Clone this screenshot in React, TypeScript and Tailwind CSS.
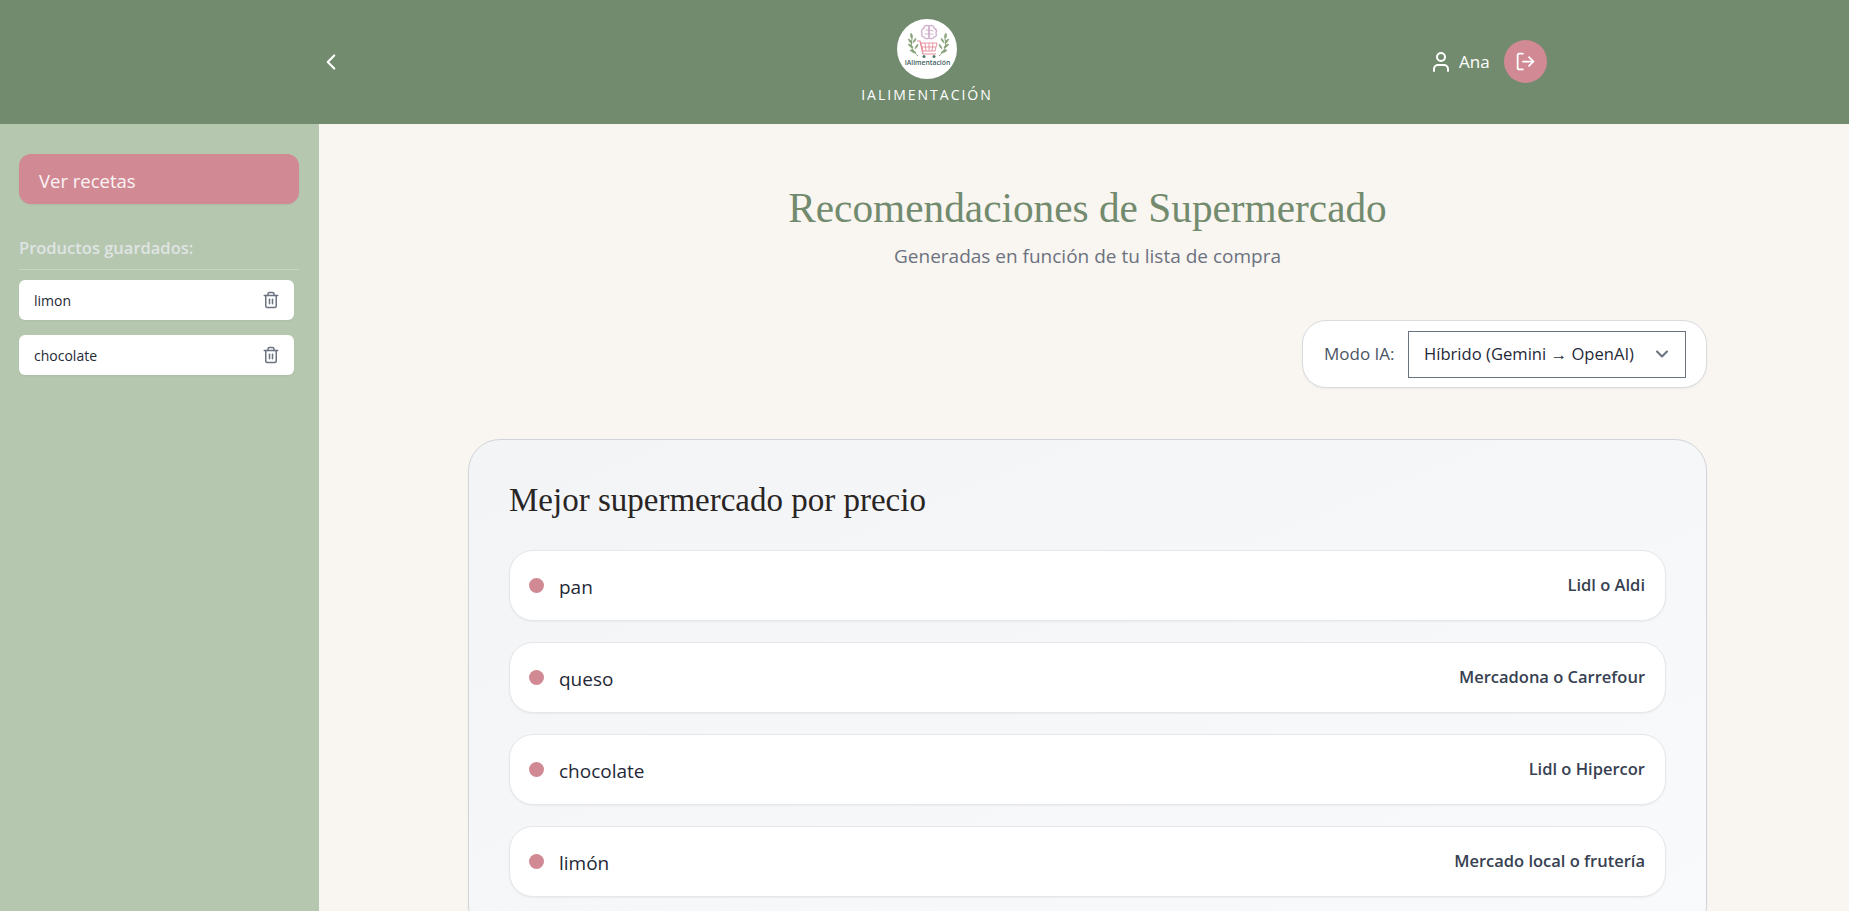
import { ChevronDown, ChevronLeft, LogOut, Trash2, User } from 'lucide-react';

const saved = ['limon', 'chocolate'];

const rows = [
  { name: 'pan', shop: 'Lidl o Aldi' },
  { name: 'queso', shop: 'Mercadona o Carrefour' },
  { name: 'chocolate', shop: 'Lidl o Hipercor' },
  { name: 'limón', shop: 'Mercado local o frutería' },
];

const Logo = () => {
  return (
    <div className="w-[60px] h-[60px] rounded-full bg-white overflow-hidden">
      <svg viewBox="0 0 60 60" className="w-full h-full">
        {/* brain */}
        <g fill="none" stroke="#d4b4d0" strokeWidth="1.5" strokeLinecap="round">
          <path d="M32 7c-2-1-5-1-5 2-2 1-3 3-2 5-1 2 0 4 2 4 1 2 3 2 5 1z" />
          <path d="M32 7c3-1 5 0 5 2 2 1 3 3 2 5 1 2 0 4-2 4-1 2-3 2-5 1z" />
          <path d="M29 11h3M28 15h4M33 11l3 1M33 15h3" strokeWidth="1.1" />
        </g>
        {/* cart */}
        <g fill="none" stroke="#e58d9b" strokeWidth="1.2" strokeLinejoin="round">
          <path d="M20 22h3l3 13h13" />
          <path d="M24 24h16l-2 8H26zM28 24l1 8M32 24v8M36 24l-1 8M25 28h14" strokeWidth="0.9" />
        </g>
        <circle cx="27" cy="37.5" r="1.5" fill="#4f7a6e" />
        <circle cx="37" cy="37.5" r="1.5" fill="#4f7a6e" />
        {/* laurel */}
        <g fill="#8aa47b" stroke="#7f9a6f" strokeWidth="0.4">
          <path d="M21 37c-5-4-8-9-6-17" fill="none" strokeWidth="0.9" />
          <path d="M15 20c-2-2-2-4-1-6 2 2 2 4 1 6z" />
          <path d="M15 25c-2-1-3-3-4-5 3 0 4 3 4 5z" />
          <path d="M16 29c-2 0-4-2-5-4 3 0 5 2 5 4z" />
          <path d="M19 34c-3 0-5-1-6-3 3-1 5 1 6 3z" />
          <path d="M16 24c0-2 1-4 3-5 0 2-1 4-3 5z" />
          <path d="M18 30c0-2 1-4 3-5 0 2-1 4-3 5z" />
          <path d="M42 37c5-4 8-9 6-17" fill="none" strokeWidth="0.9" />
          <path d="M48 20c2-2 2-4 1-6-2 2-2 4-1 6z" />
          <path d="M48 25c2-1 3-3 4-5-3 0-4 3-4 5z" />
          <path d="M47 29c2 0 4-2 5-4-3 0-5 2-5 4z" />
          <path d="M44 34c3 0 5-1 6-3-3-1-5 1-6 3z" />
          <path d="M47 24c0-2-1-4-3-5 0 2 1 4 3 5z" />
          <path d="M45 30c0-2-1-4-3-5 0 2 1 4 3 5z" />
        </g>
        <text x="30.5" y="46" textAnchor="middle" fontSize="6.8" fontWeight="600" fill="#41615e" fontFamily="'Open Sans', sans-serif">
          IAlimentación
        </text>
      </svg>
    </div>
  );
};

const App = () => {
  return (
    <div className="h-screen overflow-hidden flex flex-col bg-[#f9f5f0] font-['Open_Sans',sans-serif]">
      {/* Header */}
      <header className="h-[124px] shrink-0 bg-[#728b6e] flex items-center text-white">
        <div className="w-[861px] pl-[318px]">
          <ChevronLeft className="w-[26px] h-[26px]" strokeWidth={2} />
        </div>
        <div className="w-[132px] flex flex-col items-center pb-[1px]">
          <Logo />
          <span className="mt-[6px] text-sm font-medium tracking-[2px] whitespace-nowrap">IALIMENTACIÓN</span>
        </div>
        <div className="flex-1 flex items-center pl-[436px] pb-[1px]">
          <User className="w-6 h-6" strokeWidth={2} />
          <span className="ml-[6px] pt-[1px] text-[17px]">Ana</span>
          <div className="ml-[14px] w-[43px] h-[43px] rounded-full bg-[#d18a94] flex items-center justify-center">
            <LogOut className="w-[21px] h-[21px]" />
          </div>
        </div>
      </header>

      <div className="flex flex-1 min-h-0">
        {/* Sidebar */}
        <aside className="w-[319px] shrink-0 bg-[#b6c7b0] pt-[30px] pl-[19px] pr-[20px]">
          <button className="w-full h-[50px] rounded-xl bg-[#d18a94] text-left pl-5 pt-[3px] text-[18.5px] text-white/90 shadow-xs">
            Ver recetas
          </button>
          <h3 className="mt-[32px] text-[16.5px] font-semibold leading-6 text-[#dfe4e3]">Productos guardados:</h3>
          <div className="mt-[9px] border-t border-[#c9d6c5] pt-[10px] pr-[5px] flex flex-col gap-[15px]">
            {saved.map((item) => (
              <div key={item} className="h-10 rounded-md bg-white shadow-xs flex items-center justify-between pl-[15px] pr-[14px]">
                <span className="pt-[1px] text-sm text-[#1f2937]">{item}</span>
                <Trash2 className="w-[18px] h-[18px] text-[#6b7280]" />
              </div>
            ))}
          </div>
        </aside>

        {/* Main */}
        <main className="flex-1 min-w-0 pl-[149px] pr-[142px] pt-[64px]">
          <div className="text-center">
            <h1 className="text-[41.3px] leading-[40px] text-[#728b6e] font-['Liberation_Serif',serif]">Recomendaciones de Supermercado</h1>
            <p className="mt-[14px] text-[19px] leading-7 text-[#6b7280]">Generadas en función de tu lista de compra</p>
          </div>

          <div className="mt-[50px] flex justify-end">
            <div className="h-[68px] w-[405px] rounded-3xl bg-white border border-[#d9dbe0] shadow-xs flex items-center pl-[21px] pr-[20px] justify-between">
              <span className="text-[17px] text-[#4b5563]">Modo IA:</span>
              <div className="w-[278px] h-[47px] border border-[#6b7280] bg-white flex items-center justify-between pl-[15px] pr-[13px]">
                <span className="text-[16.6px] text-[#1f2937] whitespace-nowrap">Híbrido (Gemini → OpenAI)</span>
                <ChevronDown className="w-5 h-5 text-[#6b7280]" strokeWidth={2.5} />
              </div>
            </div>
          </div>

          {/* Card */}
          <section className="mt-[51px] rounded-[32px] border border-[#d1d5db] bg-gradient-to-br from-[#f3f4f6] to-[#f9fafb] shadow-xs px-10 pt-[40px] pb-10">
            <h2 className="text-[33px] leading-10 text-[#292524] font-['Liberation_Serif',serif]">Mejor supermercado por precio</h2>
            <div className="mt-[30px] flex flex-col gap-[21px]">
              {rows.map((row) => (
                <div key={row.name} className="h-[71px] rounded-3xl bg-white border border-[#e5e7eb] shadow-xs flex items-center justify-between pl-[19px] pr-[20px]">
                  <div className="flex items-center gap-[15px]">
                    <span className="w-[15px] h-[15px] rounded-full bg-[#d18a94]" />
                    <span className="pt-[3px] text-[19px] text-[#1f2937]">{row.name}</span>
                  </div>
                  <span className="text-[16.5px] font-semibold text-[#374151]">{row.shop}</span>
                </div>
              ))}
            </div>
          </section>
        </main>
      </div>
    </div>
  );
};

export default App;
